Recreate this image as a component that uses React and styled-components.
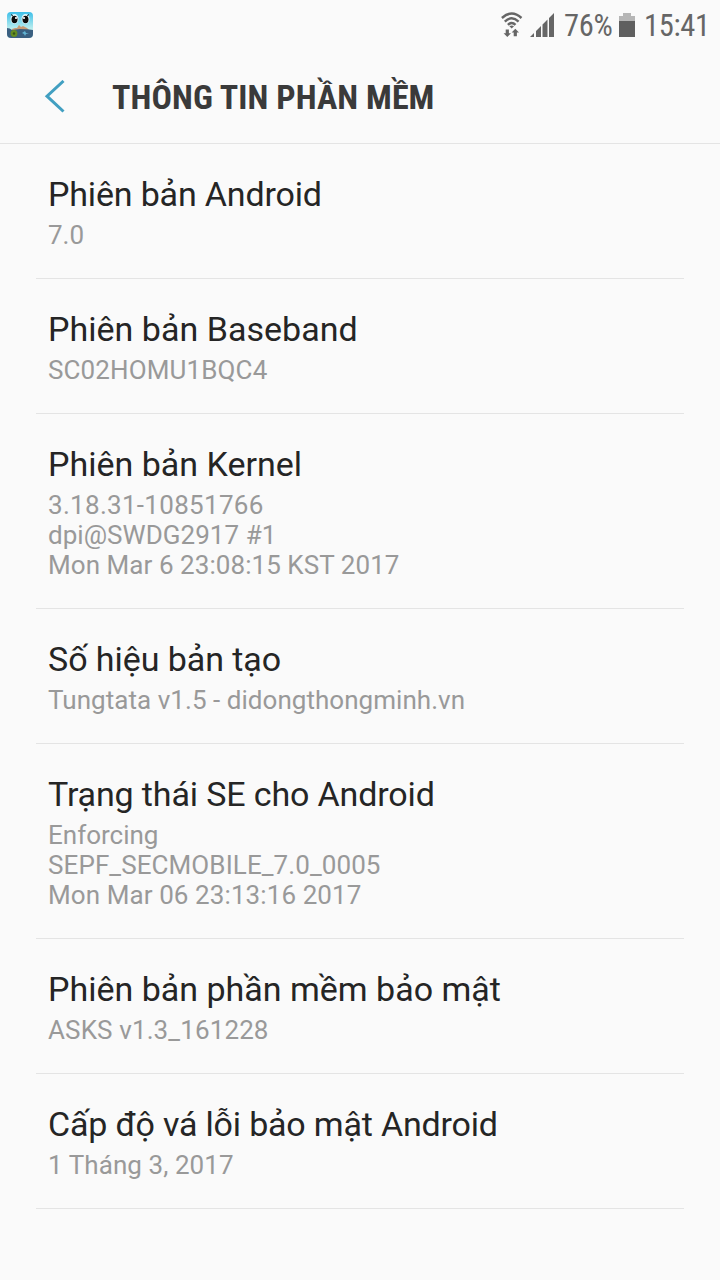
import React from 'react'
import styled, { createGlobalStyle } from 'styled-components'

const GlobalStyle = createGlobalStyle`
  * {
    box-sizing: border-box;
  }

  body {
    margin: 0;
    background: #fafafa;
    font-family: Roboto, 'Noto Sans', sans-serif;
  }
`

const Screen = styled.div`
  width: 720px;
  height: 1280px;
  overflow: hidden;
  background: #fafafa;
`

const StatusBar = styled.div`
  display: flex;
  align-items: center;
  height: 50px;
  padding: 0 11px 0 7px;
  color: #666;
`

const StatusText = styled.span`
  width: ${props => props.$width}px;
  margin-left: ${props => props.$gap}px;
  font-family: 'Roboto Condensed', Roboto, sans-serif;
  font-stretch: 75%;
  font-size: 30.500px;
  letter-spacing: -0.350px;
  line-height: 50px;
  padding-top: 2px;
  white-space: nowrap;
`

const AppIcon = styled.svg`
  width: 26px;
  height: 26px;
  margin-right: auto;
`

const WifiIcon = styled.svg`
  width: 22px;
  height: 26px;
`

const SignalIcon = styled.svg`
  width: 24px;
  height: 24px;
  margin-left: 7px;
`

const BatteryIcon = styled.svg`
  width: 16px;
  height: 24px;
  margin-left: 6px;
`

const Header = styled.header`
  display: flex;
  align-items: center;
  height: 94px;
  padding-left: 44px;
  border-bottom: 1px solid #e4e4e4;
`

const BackButton = styled.button`
  display: flex;
  width: 22px;
  height: 34px;
  padding: 0;
  border: 0;
  background: none;
  color: #419fc1;
`

const Heading = styled.h1`
  margin: 0 0 0 46px;
  font-family: 'Roboto Condensed', Roboto, sans-serif;
  font-stretch: 75%;
  font-size: 34px;
  font-weight: 700;
  letter-spacing: 0.060px;
  line-height: 40px;
  color: #3a3a3a;
  white-space: nowrap;
`

const List = styled.main`
  padding: 0 36px;
`

const Row = styled.section`
  padding: 30px 12px 28px;
  border-bottom: 1px solid #e4e4e4;
`

const Label = styled.h2`
  margin: 0;
  font-size: 34px;
  font-weight: 400;
  letter-spacing: ${props => props.$tracking || 0}px;
  line-height: 40px;
  color: #252525;
`

const Values = styled.div`
  padding-top: 6px;
`

const Value = styled.p`
  margin: 0;
  font-size: 26px;
  letter-spacing: ${props => props.$tracking || 0}px;
  line-height: 30px;
  color: #999;
`

const items = [
  { label: 'Phiên bản Android', tracking: -0.17, values: [{ text: '7.0' }] },
  {
    label: 'Phiên bản Baseband',
    tracking: 0.02,
    values: [{ text: 'SC02HOMU1BQC4', tracking: 0.12 }],
  },
  {
    label: 'Phiên bản Kernel',
    values: [
      { text: '3.18.31-10851766', tracking: 0.3 },
      { text: 'dpi@SWDG2917 #1', tracking: 0.04 },
      { text: 'Mon Mar 6 23:08:15 KST 2017', tracking: 0.06 },
    ],
  },
  {
    label: 'Số hiệu bản tạo',
    tracking: -0.06,
    values: [{ text: 'Tungtata v1.5 - didongthongminh.vn', tracking: 0.04 }],
  },
  {
    label: 'Trạng thái SE cho Android',
    tracking: -0.14,
    values: [
      { text: 'Enforcing' },
      { text: 'SEPF_SECMOBILE_7.0_0005', tracking: 0.09 },
      { text: 'Mon Mar 06 23:13:16 2017', tracking: 0.09 },
    ],
  },
  {
    label: 'Phiên bản phần mềm bảo mật',
    values: [{ text: 'ASKS v1.3_161228', tracking: 0.12 }],
  },
  {
    label: 'Cấp độ vá lỗi bảo mật Android',
    tracking: -0.19,
    values: [{ text: '1 Tháng 3, 2017', tracking: 0.07 }],
  },
]

function GameIcon() {
  return (
    <AppIcon viewBox="0 0 26 26">
      <defs>
        <linearGradient id="sky" x1="0" y1="0" x2="0" y2="1">
          <stop offset="0" stopColor="#3dbfe9" />
          <stop offset="0.65" stopColor="#bdeeee" />
        </linearGradient>
        <clipPath id="tile">
          <rect width="26" height="26" rx="4" />
        </clipPath>
      </defs>
      <g clipPath="url(#tile)">
        <rect width="26" height="26" fill="url(#sky)" />
        <path d="M5 17l3-1 2 0 2-3 2 2 2-1 4 2 2 2v1H5z" fill="#c99b74" />
        <path d="M0 16q3 0 5 2l8-1q8 0 13 1v9H0z" fill="#3a5f80" />
        <circle cx="7" cy="21.500" r="3.400" fill="#638c21" />
        <circle cx="7" cy="21.500" r="1.200" fill="#34551c" />
        <path d="M15 21l3-2 1 2 3 0-3 1-1 2-1-2z" fill="#62b3d2" />
        <ellipse cx="7.500" cy="7" rx="4" ry="5" fill="#e4f8fc" />
        <ellipse cx="18.500" cy="7" rx="4" ry="5" fill="#e4f8fc" />
        <ellipse cx="7.500" cy="7.500" rx="3" ry="3.800" fill="#0c0c0c" />
        <ellipse cx="18.500" cy="7.500" rx="3" ry="3.800" fill="#0c0c0c" />
        <path d="M4 2.500l2.500 2M22 2.500l-2.500 2" stroke="#222" />
        <circle cx="9" cy="6" r="1.100" fill="#fff" />
        <circle cx="17" cy="6" r="1.100" fill="#fff" />
      </g>
    </AppIcon>
  )
}

function Wifi() {
  return (
    <WifiIcon viewBox="0 0 22 26">
      <g fill="none" stroke="currentColor" strokeWidth="2.400">
        <path d="M0.900 6Q10.700-3 20.500 6" />
        <path d="M3.800 9.600Q10.700 3 17.600 9.600" />
        <path d="M6.900 12.900Q10.700 9 14.500 12.900" />
      </g>
      <path d="M8.400 14.200Q10.700 12.600 13 14.200L10.700 16.600z" fill="currentColor" />
      <path
        d="M4.700 17.500h3.200v3.700h2.100L6.300 25l-3.700-3.800h2.100zM12.700 24.200h3.200v-3.700H18l-3.700-3.800-3.700 3.800h2.100z"
        fill="currentColor"
      />
    </WifiIcon>
  )
}

function Signal() {
  return (
    <SignalIcon viewBox="0 0 24 24">
      <path
        d="M0 24l4-4v4zM6 24v-6l5-5v11zM12.500 24V11.500l5-5V24zM19 24V5l5-5v24z"
        fill="currentColor"
      />
    </SignalIcon>
  )
}

function Battery() {
  return (
    <BatteryIcon viewBox="0 0 16 24">
      <path d="M4 0h8v3h4v5H0V3h4z" fill="#b6b6b6" />
      <path d="M0 8h16v16H0z" fill="#5f5f5f" />
    </BatteryIcon>
  )
}

export default function App() {
  return (
    <>
      <GlobalStyle />
      <Screen>
        <StatusBar>
          <GameIcon />
          <Wifi />
          <Signal />
          <StatusText $width={49} $gap={10}>76%</StatusText>
          <Battery />
          <StatusText $width={65} $gap={9}>15:41</StatusText>
        </StatusBar>
        <Header>
          <BackButton aria-label="Quay lại">
            <svg width="22" height="34" viewBox="0 0 22 34">
              <path
                d="M19.500 1L3 16.200l16.500 15.300"
                fill="none"
                stroke="currentColor"
                strokeWidth="3"
              />
            </svg>
          </BackButton>
          <Heading>THÔNG TIN PHẦN MỀM</Heading>
        </Header>
        <List>
          {items.map(item => (
            <Row key={item.label}>
              <Label $tracking={item.tracking}>{item.label}</Label>
              <Values>
                {item.values.map(value => (
                  <Value key={value.text} $tracking={value.tracking}>
                    {value.text}
                  </Value>
                ))}
              </Values>
            </Row>
          ))}
        </List>
      </Screen>
    </>
  )
}
